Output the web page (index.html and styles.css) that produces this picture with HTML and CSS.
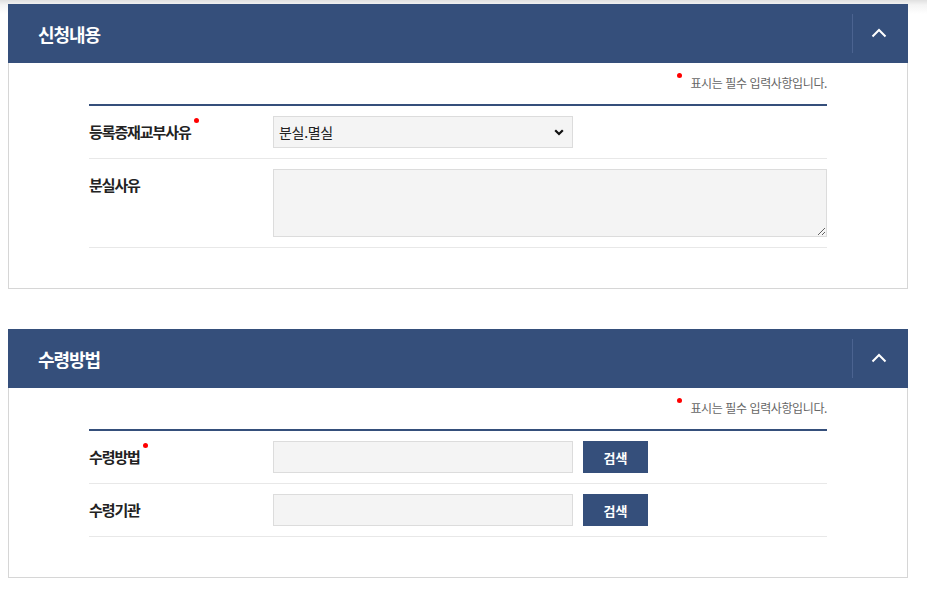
FILE: index.html
```html
<!DOCTYPE html>
<html lang="ko">
<head>
<meta charset="utf-8">
<title>신청내용</title>
<link rel="stylesheet" href="styles.css">
</head>
<body>
<div class="page">
  <section class="panel">
    <div class="panel-head">
      <h2 class="panel-title">신청내용</h2>
      <button class="toggle" type="button" aria-label="접기">
        <svg width="16" height="10" viewBox="0 0 16 10"><polyline points="1.5,8.5 8,2 14.5,8.5" fill="none" stroke="#fff" stroke-width="2"/></svg>
      </button>
    </div>
    <div class="panel-body">
      <p class="req-note"><span class="dot note-dot"></span>표시는 필수 입력사항입니다.</p>
      <div class="form">
        <div class="row">
          <div class="label">등록증재교부사유<span class="dot"></span></div>
          <div class="field">
            <div class="select-wrap">
              <select class="select">
                <option>분실.멸실</option>
              </select>
              <svg class="select-arrow" width="10" height="7" viewBox="0 0 10 7"><polyline points="1.2,1.2 5,5 8.8,1.2" fill="none" stroke="#111" stroke-width="2.2"/></svg>
            </div>
          </div>
        </div>
        <div class="row">
          <div class="label">분실사유</div>
          <div class="field grow">
            <textarea class="textarea"></textarea>
          </div>
        </div>
      </div>
    </div>
  </section>

  <section class="panel">
    <div class="panel-head">
      <h2 class="panel-title">수령방법</h2>
      <button class="toggle" type="button" aria-label="접기">
        <svg width="16" height="10" viewBox="0 0 16 10"><polyline points="1.5,8.5 8,2 14.5,8.5" fill="none" stroke="#fff" stroke-width="2"/></svg>
      </button>
    </div>
    <div class="panel-body">
      <p class="req-note"><span class="dot note-dot"></span>표시는 필수 입력사항입니다.</p>
      <div class="form">
        <div class="row">
          <div class="label">수령방법<span class="dot"></span></div>
          <div class="field">
            <input class="input" type="text">
            <button class="btn" type="button">검색</button>
          </div>
        </div>
        <div class="row">
          <div class="label">수령기관</div>
          <div class="field">
            <input class="input" type="text">
            <button class="btn" type="button">검색</button>
          </div>
        </div>
      </div>
    </div>
  </section>
</div>
</body>
</html>
```

FILE: styles.css
```css
* { box-sizing: border-box; }

html, body {
  margin: 0;
  padding: 0;
}

body {
  font-family: "Noto Sans CJK KR", "Noto Sans", sans-serif;
  color: #222;
  background: linear-gradient(#e0e0e0 0, #f4f4f4 5px, #ffffff 14px) no-repeat;
  background-color: #fff;
}

.page {
  padding: 4px 19px 0 8px;
}

.panel + .panel {
  margin-top: 40px;
}

.panel-head {
  display: flex;
  align-items: center;
  height: 59px;
  padding: 0 4px 0 30px;
  background: #354f7b;
}

.panel-title {
  flex: 1;
  margin: 0;
  font-size: 18px;
  font-weight: 700;
  letter-spacing: -1.1px;
  color: #fff;
  line-height: 24px;
}

.toggle {
  width: 52px;
  height: 39px;
  padding: 0;
  border: 0;
  border-left: 1px solid #4b6390;
  background: transparent;
  display: flex;
  align-items: center;
  justify-content: center;
  cursor: pointer;
}

.toggle svg {
  display: block;
  margin-top: -2px;
}

.panel-body {
  border: 1px solid #d6d6d6;
  border-top: 0;
  padding: 12px 80px 40px;
}

.req-note {
  margin: 0 0 13px;
  text-align: right;
  font-size: 12px;
  line-height: 16px;
  letter-spacing: -0.4px;
  color: #666;
}

.dot {
  display: inline-block;
  width: 5px;
  height: 5px;
  border-radius: 50%;
  background: #f00;
  vertical-align: top;
  margin: 2px 0 0 3px;
}

.note-dot {
  margin: 0 8px 0 0;
  transform: translateY(-2px);
}

.form {
  border-top: 2px solid #354f7b;
}

.row {
  display: flex;
  align-items: flex-start;
  padding: 10px 0;
  border-bottom: 1px solid #e8e8e8;
}

.label {
  width: 184px;
  flex: none;
  font-size: 15px;
  font-weight: 700;
  line-height: 32px;
  letter-spacing: -1.1px;
  color: #222;
}

.field {
  display: flex;
  align-items: center;
}

.field.grow {
  flex: 1;
}

.select-wrap {
  position: relative;
  width: 300px;
  height: 32px;
}

.select {
  appearance: none;
  -webkit-appearance: none;
  width: 100%;
  height: 32px;
  margin: 0;
  padding: 0 24px 0 5px;
  border: 1px solid #dcdcdc;
  border-radius: 0;
  background: #f4f4f4;
  font-family: inherit;
  font-size: 14px;
  letter-spacing: -0.3px;
  color: #222;
}

.select-arrow {
  position: absolute;
  right: 9px;
  top: 13px;
  pointer-events: none;
}

.textarea {
  display: block;
  width: 100%;
  height: 68px;
  margin: 0;
  padding: 6px;
  border: 1px solid #dcdcdc;
  border-radius: 0;
  background: #f4f4f4;
  font-family: inherit;
  font-size: 13px;
  resize: vertical;
}

.input {
  width: 300px;
  height: 32px;
  margin: 0;
  padding: 0 6px;
  border: 1px solid #dcdcdc;
  border-radius: 0;
  background: #f4f4f4;
  font-family: inherit;
  font-size: 13px;
}

.btn {
  width: 65px;
  height: 32px;
  margin-left: 10px;
  padding: 0;
  border: 0;
  background: #354f7b;
  color: #fff;
  font-family: inherit;
  font-size: 13px;
  font-weight: 700;
  cursor: pointer;
}
```
